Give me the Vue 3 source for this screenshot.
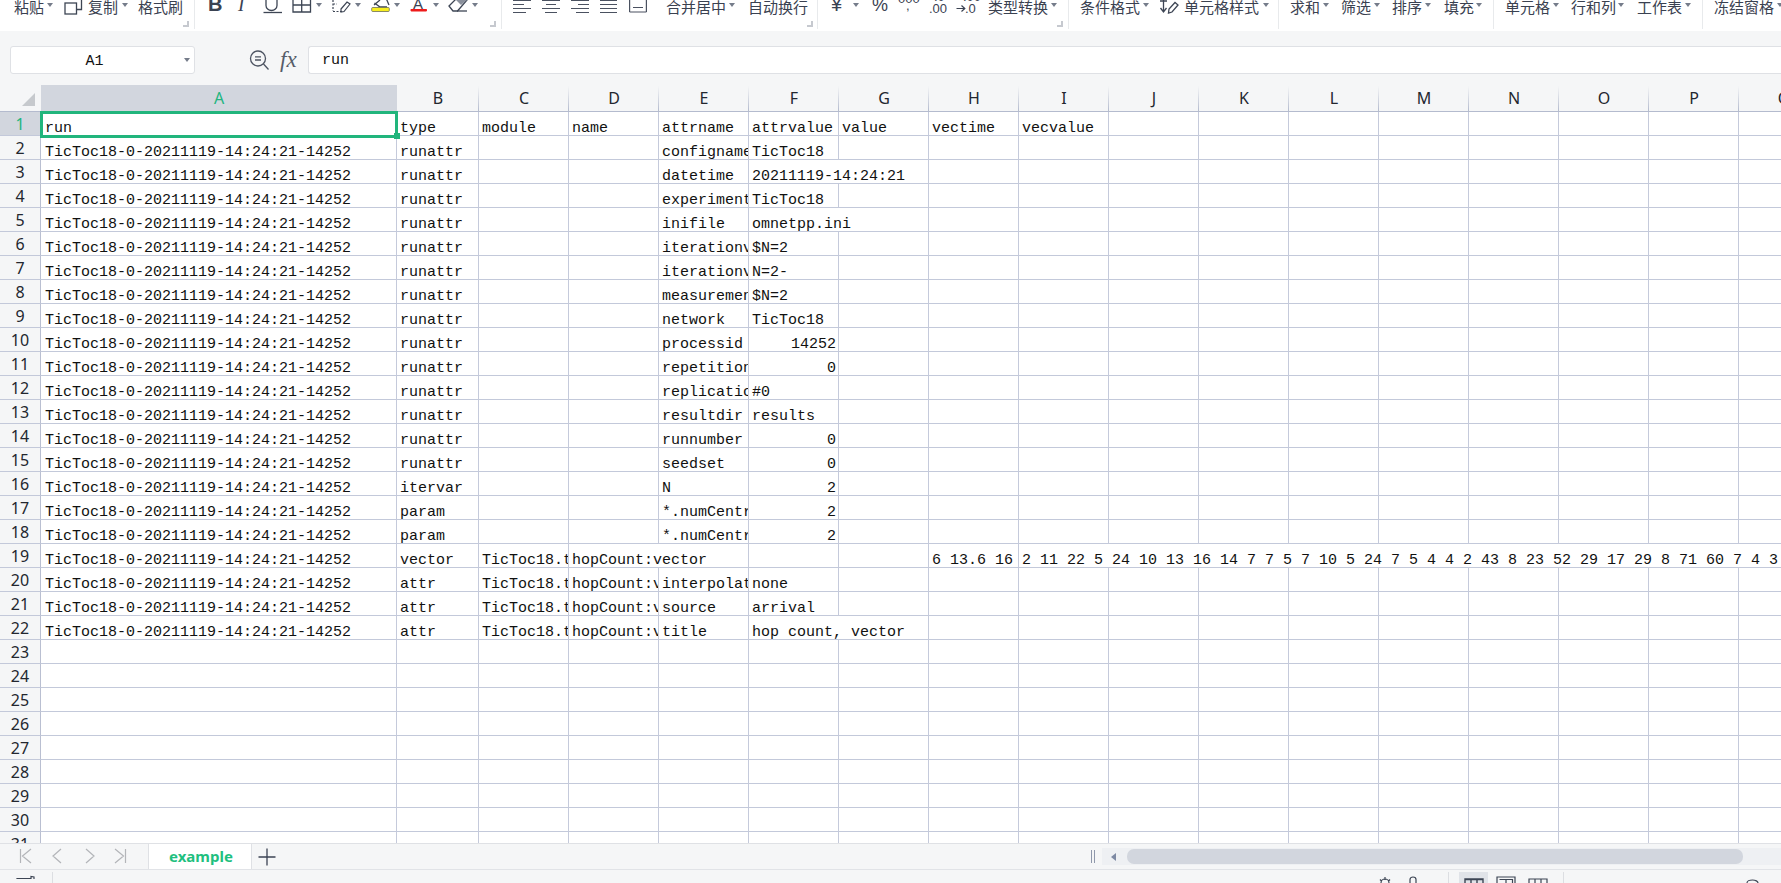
<script setup>
const withWidths = (list, end) =>
  list.map((it, i) => ({ ...it, w: (i + 1 < list.length ? list[i + 1].x : end) - it.x }))

const ribbon = withWidths([
  { x: 0 }, { x: 14, t: '粘贴' }, { x: 47, c: 1 }, { x: 64, s: 'copy' }, { x: 88, t: '复制' }, { x: 122, c: 1 },
  { x: 138, t: '格式刷' }, { x: 183, k: 1 }, { x: 194, sep: 1 },
  { x: 208, s: 'bold' }, { x: 238, s: 'italic' }, { x: 263, s: 'under' }, { x: 292, s: 'border' }, { x: 316, c: 1 },
  { x: 332, s: 'pen' }, { x: 355, c: 1 }, { x: 371, s: 'fill' }, { x: 394, c: 1 }, { x: 410, s: 'color' }, { x: 433, c: 1 },
  { x: 448, s: 'eraser' }, { x: 472, c: 1 }, { x: 490, k: 1 }, { x: 501, sep: 1 },
  { x: 513, s: 'left' }, { x: 542, s: 'center' }, { x: 571, s: 'right' }, { x: 600, s: 'just' }, { x: 629, s: 'merge' },
  { x: 666, t: '合并居中' }, { x: 729, c: 1 }, { x: 748, t: '自动换行' }, { x: 807, k: 1 }, { x: 817, sep: 1 },
  { x: 831, s: 'yen' }, { x: 853, c: 1 }, { x: 872, s: 'pct' }, { x: 898, s: 'thou' }, { x: 929, s: 'inc' }, { x: 956, s: 'dec' },
  { x: 988, t: '类型转换' }, { x: 1051, c: 1 }, { x: 1057, k: 1 }, { x: 1068, sep: 1 },
  { x: 1080, t: '条件格式' }, { x: 1143, c: 1 }, { x: 1160, s: 'sort' }, { x: 1184, t: '单元格样式' }, { x: 1263, c: 1 }, { x: 1278, sep: 1 },
  { x: 1290, t: '求和' }, { x: 1323, c: 1 }, { x: 1341, t: '筛选' }, { x: 1374, c: 1 }, { x: 1392, t: '排序' }, { x: 1425, c: 1 },
  { x: 1444, t: '填充' }, { x: 1476, c: 1 }, { x: 1493, sep: 1 },
  { x: 1505, t: '单元格' }, { x: 1553, c: 1 }, { x: 1571, t: '行和列' }, { x: 1618, c: 1 }, { x: 1637, t: '工作表' }, { x: 1685, c: 1 }, { x: 1702, sep: 1 },
  { x: 1714, t: '冻结窗格' }, { x: 1777, c: 1 },
], 1781)

const status = withWidths([
  { x: 0 }, { x: 16, s: 'cam' }, { x: 52, sep: 1 }, { x: 1378, s: 'sun' }, { x: 1408, s: 'lock' }, { x: 1448, sep: 1 },
  { x: 1459, s: 'v1' }, { x: 1496, s: 'v2' }, { x: 1528, s: 'v3' }, { x: 1563, sep: 1 }, { x: 1578, t: '100%' },
  { x: 1745, s: 'round' },
], 1781)

const colNames = 'ABCDEFGHIJKLMNOPQ'.split('')
const colW = [356, 82, ...Array(15).fill(90)]

const R = 'TicToc18-0-20211119-14:24:21-14252'
const M = 'TicToc18.tic[1]'
const V = 'hopCount:vector'
const data = [
  ['run', 'type', 'module', 'name', 'attrname', 'attrvalue', 'value', 'vectime', 'vecvalue'],
  [R, 'runattr', '', '', 'configname', 'TicToc18'],
  [R, 'runattr', '', '', 'datetime', '20211119-14:24:21'],
  [R, 'runattr', '', '', 'experiment', 'TicToc18'],
  [R, 'runattr', '', '', 'inifile', 'omnetpp.ini'],
  [R, 'runattr', '', '', 'iterationvars', '$N=2'],
  [R, 'runattr', '', '', 'iterationvarsf', 'N=2-'],
  [R, 'runattr', '', '', 'measurement', '$N=2'],
  [R, 'runattr', '', '', 'network', 'TicToc18'],
  [R, 'runattr', '', '', 'processid', 14252],
  [R, 'runattr', '', '', 'repetition', 0],
  [R, 'runattr', '', '', 'replication', '#0'],
  [R, 'runattr', '', '', 'resultdir', 'results'],
  [R, 'runattr', '', '', 'runnumber', 0],
  [R, 'runattr', '', '', 'seedset', 0],
  [R, 'itervar', '', '', 'N', 2],
  [R, 'param', '', '', '*.numCentralNodes', 2],
  [R, 'param', '', '', '*.numCentralNodes', 2],
  [R, 'vector', M, V, '', '', '', '6 13.6 16', '2 11 22 5 24 10 13 16 14 7 7 5 7 10 5 24 7 5 4 4 2 43 8 23 52 29 17 29 8 71 60 7 4 3'],
  [R, 'attr', M, V, 'interpolationmode', 'none'],
  [R, 'attr', M, V, 'source', 'arrival'],
  [R, 'attr', M, V, 'title', 'hop count, vector'],
]

const buildRow = (values) => {
  const cells = []
  for (let i = 0; i < colNames.length; i++) {
    const v = values[i] ?? ''
    const isNum = typeof v === 'number'
    let span = 1
    if (!isNum && v !== '') {
      const need = String(v).length * 9 + 3
      let have = colW[i]
      while (have < need && i + span < colNames.length && (values[i + span] ?? '') === '') {
        have += colW[i + span]
        span++
      }
    }
    cells.push({ key: i, text: String(v), isNum, span })
    i += span - 1
  }
  return cells
}

const rows = Array.from({ length: 31 }, (_, n) => ({ n: n + 1, cells: buildRow(data[n] || []) }))
</script>

<template>
  <div class="app">
    <header class="ribbon">
      <template v-for="(it, i) in ribbon" :key="i">
        <div class="rcell" :style="{ width: it.w + 'px' }">
          <span v-if="it.t" class="rtext">{{ it.t }}</span>
          <i v-else-if="it.c" class="caret"></i>
          <i v-else-if="it.sep" class="rsep"></i>
          <i v-else-if="it.k" class="corner"></i>
          <svg v-else-if="it.s" class="ico" width="26" height="31" viewBox="0 0 26 31">
            <g v-if="it.s === 'copy'" fill="none" stroke="#3d4554" stroke-width="1.3">
              <path d="M5.5 -2H17.5V9.5H13" /><rect x="1" y="3" width="11.5" height="11" fill="#fff" />
            </g>
            <text v-else-if="it.s === 'bold'" x="0" y="11" class="svgb">B</text>
            <text v-else-if="it.s === 'italic'" x="0" y="11" class="svgi">I</text>
            <g v-else-if="it.s === 'under'">
              <path d="M3 -2V5.5A5.5 5 0 0 0 14 5.5V-2" fill="none" stroke="#3d4554" stroke-width="1.3" />
              <path d="M0.5 12.5H19" stroke="#3d4554" stroke-width="1.3" />
            </g>
            <g v-else-if="it.s === 'border'" fill="none" stroke="#3d4554" stroke-width="1.3">
              <path d="M1 -2H18.5V12H1ZM9.7 -2V12M1 5H18.5" />
            </g>
            <g v-else-if="it.s === 'pen'" fill="none" stroke="#3d4554" stroke-width="1.2">
              <path d="M1 11.5H11M1 0V11M1 4H5" stroke-dasharray="2 1.5" />
              <path d="M9 9L15 2L18 4L12 11.5L9 12Z" />
            </g>
            <g v-else-if="it.s === 'fill'">
              <path d="M3 5L9 0M15 -2L18 5" fill="none" stroke="#3d4554" stroke-width="1.3" />
              <path d="M3.5 3L9 7H16" fill="none" stroke="#3d4554" stroke-width="1.3" />
              <rect x="0.7" y="7.5" width="17.6" height="4" rx="1" fill="#f7ee1f" stroke="#6d6f58" stroke-width="0.8" />
            </g>
            <g v-else-if="it.s === 'color'">
              <text x="3" y="8.5" class="svga">A</text>
              <rect x="0.5" y="9" width="16.5" height="2.4" rx="0.8" fill="#ee1b1b" />
            </g>
            <g v-else-if="it.s === 'eraser'" fill="none" stroke="#3d4554" stroke-width="1.3">
              <path d="M1 6L8 -1L19 0L9.5 11L5 11Z" />
              <path d="M9 11H19" />
              <path d="M7 -1L19 0L13 5Z" fill="#8a909c" stroke="none" />
            </g>
            <path v-else-if="it.s === 'left'" d="M0 0.5H18M0 4.5H11M0 8.5H18M0 12.5H13" stroke="#4a5160" stroke-width="1.2" />
            <path v-else-if="it.s === 'center'" d="M0 0.5H18M4 4.5H14M0 8.5H18M3 12.5H15" stroke="#4a5160" stroke-width="1.2" />
            <path v-else-if="it.s === 'right'" d="M0 0.5H18M7 4.5H18M0 8.5H18M5 12.5H18" stroke="#4a5160" stroke-width="1.2" />
            <path v-else-if="it.s === 'just'" d="M0 0.5H17M0 4.5H17M0 8.5H17M0 12.5H17" stroke="#4a5160" stroke-width="1.2" />
            <g v-else-if="it.s === 'merge'" fill="none" stroke="#4a5160" stroke-width="1.2">
              <path d="M0.6 -2V12M17.4 -2V12M0.6 12H17.4M4 7.5H14" />
            </g>
            <text v-else-if="it.s === 'yen'" x="0" y="11" class="svgy">¥</text>
            <text v-else-if="it.s === 'pct'" x="0" y="11" class="svgp">%</text>
            <g v-else-if="it.s === 'thou'">
              <text x="0" y="3" class="svgs">000</text>
              <text x="8" y="10" class="svgs">,</text>
            </g>
            <g v-else-if="it.s === 'inc'">
              <text x="5" y="1" class="svgs">.0</text>
              <text x="0" y="13" class="svgs">.00</text>
            </g>
            <g v-else-if="it.s === 'dec'">
              <text x="7" y="1" class="svgs">.00</text>
              <path d="M0.5 8.5H8.5M5.5 5.5L8.8 8.5L5.5 11.5" fill="none" stroke="#3a4252" stroke-width="1.2" />
              <text x="9" y="13" class="svgs">.0</text>
            </g>
            <g v-else-if="it.s === 'sort'" fill="none" stroke="#3d4554" stroke-width="1.3">
              <path d="M3.5 -2V11M0.5 8L3.5 12L6.5 8M0 1H7" />
              <path d="M8.5 13L9 9L15 2.5L18 5L12 12Z" />
            </g>
          </svg>
        </div>
      </template>
    </header>

    <section class="fbar">
      <div class="namebox"><span class="nametext">A1</span><i class="caret namecaret"></i></div>
      <svg class="zoomico" width="22" height="22" viewBox="0 0 22 22">
        <circle cx="9" cy="8.5" r="7.5" fill="none" stroke="#4d5462" stroke-width="1.3" />
        <path d="M14.5 14L19.5 19.5M6 6.8H12M6 10H12" stroke="#4d5462" stroke-width="1.3" fill="none" />
      </svg>
      <span class="fx">fx</span>
      <div class="finput">run</div>
    </section>

    <main class="sheet">
      <div class="row headrow">
        <div class="corner-cell"><i class="tri"></i></div>
        <div v-for="c in colNames" :key="c" class="colhead" :class="{ active: c === 'A' }">
          <span class="collabel">{{ c }}</span>
        </div>
      </div>
      <div v-for="r in rows" :key="r.n" class="row">
        <div class="rowhead" :class="{ active: r.n === 1 }">{{ r.n }}</div>
        <div
          v-for="cell in r.cells"
          :key="cell.key"
          class="cell"
          :class="{ num: cell.isNum, first: cell.key === 0 }"
          :style="cell.span > 1 ? { gridColumn: 'span ' + cell.span } : null"
        >{{ cell.text }}</div>
      </div>
      <div class="sel"></div>
      <div class="handle"></div>
    </main>

    <section class="tabbar">
      <div class="nav">
        <svg width="148" height="27" viewBox="0 0 148 27" fill="none" stroke="#b3b5b9" stroke-width="1.2">
          <path d="M20.5 6V20M31 6L22.5 13L31 20M61 6L53 13L61 20M86 6L94 13L86 20M115 6L123.5 13L115 20M125.5 6V20" />
        </svg>
      </div>
      <div class="tab">example</div>
      <svg class="plus" width="18" height="18" viewBox="0 0 18 18"><path d="M0.5 9H17.5M9 0.5V17.5" stroke="#3b4354" stroke-width="1.3" /></svg>
      <div class="grip"></div>
      <div class="track">
        <i class="larrow"></i>
        <div class="thumb"></div>
      </div>
    </section>

    <footer class="status">
      <template v-for="(it, i) in status" :key="i">
        <div class="scell" :style="{ width: it.w + 'px' }">
          <span v-if="it.t" class="stext">{{ it.t }}</span>
          <i v-else-if="it.sep" class="ssep"></i>
          <div v-else-if="it.s === 'v1'" class="vactive">
            <svg width="20" height="12" viewBox="0 0 20 12"><path d="M1 8V1H19V8M1 1.5H19M7 1V8M13 1V8" fill="none" stroke="#3d4554" stroke-width="1.4" /></svg>
          </div>
          <svg v-else-if="it.s" width="28" height="13" viewBox="0 0 28 13" fill="none" stroke="#3d4554" stroke-width="1.2">
            <path v-if="it.s === 'cam'" d="M1 9V8.5H15V9M15 8V6.5L18 7V9" />
            <path v-else-if="it.s === 'sun'" d="M7 7V10M2 9.5L3.5 11M12 9.5L10.5 11M3 13A4 4 0 0 1 11 13" />
            <path v-else-if="it.s === 'lock'" d="M2 13V9.5A3 2.5 0 0 1 8 9.5V13" />
            <path v-else-if="it.s === 'v2'" d="M1 13V7H19V13M3.5 9.5H16.5V13M10 9.5V13" />
            <path v-else-if="it.s === 'v3'" d="M1 13V9H19V13M7 9V13M13 9V13" />
            <path v-else-if="it.s === 'round'" d="M2 13A5.5 3 0 0 1 13 13" />
          </svg>
        </div>
      </template>
    </footer>
  </div>
</template>

<style>
html, body { margin: 0; padding: 0; overflow: hidden; background: #fff; }
</style>

<style scoped>
.app {
  width: 1781px;
  height: 883px;
  display: flex;
  flex-direction: column;
  overflow: hidden;
  background: #f5f6f7;
}

.ribbon {
  height: 31px;
  flex: none;
  display: flex;
  overflow: hidden;
  background: #fff;
  position: relative;
  z-index: 2;
}
.rcell { flex: none; height: 31px; position: relative; }
.rtext {
  display: block;
  white-space: nowrap;
  font: 15px/14px "Noto Sans CJK SC", sans-serif;
  color: #3a4150;
}
.caret {
  display: block;
  width: 0;
  height: 0;
  margin-top: 3px;
  border-left: 3px solid transparent;
  border-right: 3px solid transparent;
  border-top: 4px solid #757c8a;
}
.rsep { display: block; width: 1px; height: 29px; background: #e8eaec; }
.corner {
  display: block;
  width: 6px;
  height: 6px;
  margin-top: 21px;
  border-right: 2px solid #c6c9cf;
  border-bottom: 2px solid #c6c9cf;
  box-sizing: border-box;
}
.ico { display: block; overflow: visible; }
.svgb { font: bold 20px "Liberation Sans", sans-serif; fill: #3a4252; }
.svgi { font: italic 19px "Liberation Serif", serif; fill: #3a4252; }
.svga { font: 15px "Liberation Sans", sans-serif; fill: #3a4252; }
.svgy { font: 20px "Liberation Sans", sans-serif; fill: #3a4252; }
.svgp { font: 18px "Liberation Sans", sans-serif; fill: #3a4252; }
.svgs { font: 13px "Liberation Sans", sans-serif; fill: #3a4252; }

.fbar {
  height: 43px;
  flex: none;
  box-sizing: border-box;
  padding-top: 15px;
  display: flex;
  align-items: flex-start;
  background: #f5f6f7;
}
.namebox {
  width: 185px;
  height: 28px;
  margin-left: 10px;
  box-sizing: border-box;
  background: #fff;
  border: 1px solid #dfe1e5;
  border-radius: 3px;
  display: flex;
  align-items: center;
  justify-content: center;
  position: relative;
}
.nametext { font: 15px "Liberation Mono", monospace; color: #111; margin-left: -16px; padding-top: 2px; }
.namecaret { position: absolute; right: 4px; top: 11px; margin: 0; }
.zoomico { margin: 4px 0 0 54px; flex: none; }
.fx {
  margin: 0 0 0 9px;
  width: 28px;
  flex: none;
  font: italic 23px/27px "Liberation Serif", serif;
  color: #555c69;
}
.finput {
  flex: 1;
  height: 28px;
  box-sizing: border-box;
  padding-left: 13px;
  background: #fff;
  border: 1px solid #dfe1e5;
  border-right: 0;
  border-radius: 3px 0 0 3px;
  font: 15px/27px "Liberation Mono", monospace;
  color: #111;
}

.sheet {
  flex: 1;
  min-height: 0;
  overflow: hidden;
  position: relative;
  background: #fff;
}
.row {
  display: grid;
  grid-template-columns: 41px 356px 82px repeat(15, 90px);
  grid-auto-rows: 24px;
  width: 1829px;
}
.headrow { grid-auto-rows: 38px; background: #f5f6f7; }
.corner-cell { position: relative; border-bottom: 1px solid #b4bbce; box-sizing: border-box; }
.tri {
  position: absolute;
  left: 22px;
  top: 19px;
  width: 13px;
  height: 13px;
  background: #c6c9cd;
  clip-path: polygon(100% 0, 100% 100%, 0 100%);
}
.colhead {
  position: relative;
  box-sizing: border-box;
  border-bottom: 1px solid #b4bbce;
  padding-top: 11px;
}
.colhead::after {
  content: "";
  position: absolute;
  right: 0;
  top: 12px;
  bottom: 0;
  width: 1px;
  background: linear-gradient(#f5f6f7, #b4bbce);
}
.collabel {
  display: block;
  height: 26px;
  text-align: center;
  font: 16px/26px "Noto Sans", sans-serif;
  color: #23272f;
}
.colhead.active .collabel { background: #d2d6de; color: #22b57e; }
.colhead.active::after { display: none; }
.rowhead {
  box-sizing: border-box;
  background: #f5f6f7;
  border-right: 1px solid #b9bfd1;
  border-bottom: 1px solid #c3c9da;
  text-align: center;
  font: 16px/25px "Noto Sans", sans-serif;
  color: #23272f;
}
.rowhead.active { background: #d2d6de; color: #22b57e; }
.cell {
  box-sizing: border-box;
  min-width: 0;
  overflow: hidden;
  white-space: pre;
  padding: 6px 0 0 3px;
  border-right: 1px solid #c5cadb;
  border-bottom: 1px solid #c3c9da;
  font: 15px/21px "Liberation Mono", monospace;
  color: #111;
}
.cell.first { padding-left: 4px; }
.cell.num { text-align: right; padding-right: 2px; }
.sel {
  position: absolute;
  left: 40px;
  top: 37px;
  width: 358px;
  height: 27px;
  box-sizing: border-box;
  border: 3px solid #21b57c;
}
.handle {
  position: absolute;
  left: 394px;
  top: 59px;
  width: 6px;
  height: 6px;
  background: #21b57c;
}

.tabbar {
  height: 27px;
  flex: none;
  box-sizing: border-box;
  display: flex;
  background: #f5f6f7;
  border-top: 1px solid #dfe1e5;
  border-bottom: 1px solid #e1e3e7;
}
.nav { width: 148px; flex: none; height: 25px; border-right: 1px solid #dfe1e5; box-sizing: content-box; }
.nav svg { display: block; margin-top: -1px; }
.tab {
  width: 103px;
  flex: none;
  box-sizing: border-box;
  background: #fff;
  border-right: 1px solid #dfe1e5;
  padding-left: 20px;
  font: bold 15px/24px "Noto Sans", sans-serif;
  color: #1fc07f;
}
.plus { margin: 4px 0 0 6px; flex: none; }
.grip {
  width: 4px;
  height: 13px;
  flex: none;
  margin: 6px 0 0 815px;
  border-left: 1px solid #8f98ab;
  border-right: 1px solid #8f98ab;
  box-sizing: border-box;
}
.track {
  flex: 1;
  height: 17px;
  margin: 4px 0 0 7px;
  background: #eef0f3;
  position: relative;
  display: flex;
  align-items: center;
}
.larrow {
  display: block;
  width: 0;
  height: 0;
  margin-left: 9px;
  border-top: 4px solid transparent;
  border-bottom: 4px solid transparent;
  border-right: 5px solid #7d89a3;
}
.thumb {
  width: 616px;
  height: 15px;
  margin-left: 11px;
  border-radius: 7px;
  background: #d2d6de;
}

.status {
  height: 13px;
  flex: none;
  display: flex;
  overflow: hidden;
  background: #f5f6f7;
}
.scell { flex: none; height: 13px; overflow: hidden; }
.scell svg { display: block; }
.ssep { display: block; width: 1px; height: 11px; margin-top: 2px; background: #dcdee2; }
.stext {
  display: block;
  padding-top: 11px;
  font: 14px/14px "Noto Sans", sans-serif;
  color: #3a4150;
}
.vactive {
  width: 29px;
  height: 11px;
  margin-top: 2px;
  padding: 6px 0 0 5px;
  box-sizing: border-box;
  background: #e0e3e8;
}
</style>
